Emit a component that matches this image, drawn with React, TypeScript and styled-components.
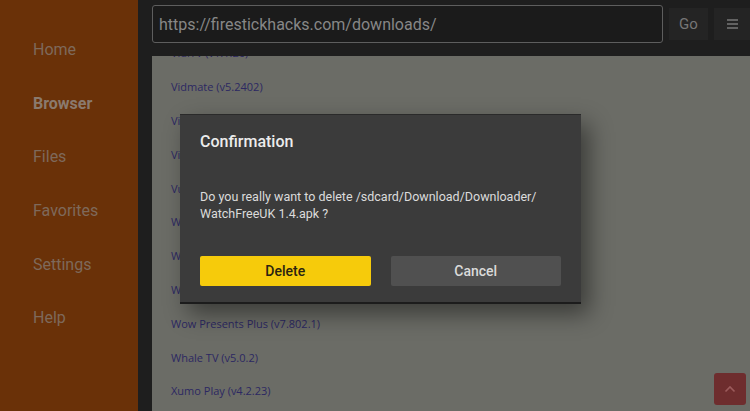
import * as React from 'react';
import styled, { createGlobalStyle } from 'styled-components';

const GlobalStyle = createGlobalStyle`
  html, body {
    margin: 0;
    padding: 0;
    background: #1e1e1e;
  }
  body {
    font-family: Roboto, "Noto Sans", sans-serif;
  }
`;

const StyledScreen = styled.div`
  display: flex;
  position: relative;
  width: 750px;
  height: 411px;
  overflow: hidden;
`;

const StyledSidebar = styled.nav`
  flex-direction: column;
  display: flex;
  flex: 0 0 138px;
  padding-top: 23px;
  background-color: #6a3108;
`;

const StyledNavItem = styled.div<{ $active?: boolean }>`
  align-items: center;
  display: flex;
  height: 53.6px;
  padding-left: 33px;
  font-size: 16px;
  font-weight: ${(p) => (p.$active ? 700 : 400)};
  color: ${(p) => (p.$active ? '#8a7a6e' : '#7e695b')};
`;

const StyledMain = styled.div`
  flex-direction: column;
  display: flex;
  flex: 1;
  padding-left: 14px;
  background-color: #1e1e1e;
`;

const StyledToolbar = styled.div`
  align-items: flex-start;
  display: flex;
  gap: 6px;
  flex: 0 0 56px;
  padding-top: 5px;
  box-sizing: border-box;
`;

const StyledUrlInput = styled.div`
  align-items: center;
  display: flex;
  flex: 0 0 511px;
  box-sizing: border-box;
  height: 38px;
  padding-left: 6px;
  border: 1px solid #5e5e5e;
  border-radius: 3px;
  background-color: #1b1b1b;
  font-size: 16px;
  color: #878787;
  white-space: nowrap;
`;

const StyledToolButton = styled.div<{ $width: number }>`
  justify-content: center;
  align-items: center;
  display: flex;
  margin-top: 3px;
  width: ${(p) => p.$width}px;
  height: 32px;
  background-color: #242424;
  font-size: 15px;
  color: #767676;
`;

const StyledContent = styled.div`
  flex: 1;
  overflow: hidden;
  background-color: #6b6c66;
`;

const StyledList = styled.ul`
  margin: -20px 0 0;
  padding: 0 0 0 19px;
  list-style: none;
`;

const StyledLink = styled.li`
  align-items: center;
  display: flex;
  height: 33.8px;
  font-family: "Open Sans", "Noto Sans", sans-serif;
  font-size: 11px;
  color: #2c2862;
  white-space: nowrap;
`;

const StyledOverlay = styled.div`
  justify-content: center;
  align-items: center;
  display: flex;
  position: absolute;
  inset: 0;
  padding: 6px 0 0 11px;
`;

const StyledDialog = styled.div`
  flex-direction: column;
  display: flex;
  box-sizing: border-box;
  width: 401px;
  padding: 17px 20px 16px;
  border-top: 1px solid #2a2a2a;
  border-bottom: 2px solid #1c1c1c;
  background-color: #3b3b3b;
  box-shadow: 8px 10px 22px rgba(0, 0, 0, 0.45);
`;

const StyledTitle = styled.div`
  line-height: 20px;
  font-size: 16px;
  font-weight: 500;
  color: #ececec;
`;

const StyledMessage = styled.p`
  margin: 36px 0 34px;
  line-height: 17px;
  font-size: 12.5px;
  color: #dcdcdc;
`;

const StyledActions = styled.div`
  display: flex;
  gap: 20px;
`;

const StyledDialogButton = styled.button<{ $primary?: boolean }>`
  flex: 1;
  height: 30px;
  border: none;
  border-radius: 2px;
  padding: 0;
  background-color: ${(p) => (p.$primary ? '#f6cb0b' : '#505050')};
  font-family: Roboto, "Noto Sans", sans-serif;
  font-size: 14px;
  font-weight: 500;
  color: ${(p) => (p.$primary ? '#2a2411' : '#dadada')};
`;

const StyledScrollTop = styled.div`
  justify-content: center;
  align-items: center;
  display: flex;
  position: absolute;
  right: 4px;
  bottom: 6px;
  width: 32px;
  height: 32px;
  border-radius: 3px;
  background-color: #6e2d2e;
`;

const navItems = ['Home', 'Browser', 'Files', 'Favorites', 'Settings', 'Help'];

const apps = [
  'VidiTV (v1.1.26)',
  'Vidmate (v5.2402)',
  'Viki (v23.4.1)',
  'Vix (v4.12.0)',
  'Vudu (v9.2.1)',
  'WatchFreeUK (v1.4)',
  'Weatherbug (v5.95.1)',
  'WWE (v48.2.0)',
  'Wow Presents Plus (v7.802.1)',
  'Whale TV (v5.0.2)',
  'Xumo Play (v4.2.23)',
];

const MenuIcon = () => (
  <svg width="11" height="10" viewBox="0 0 11 10">
    <path d="M0 1h11M0 5h11M0 9h11" stroke="#777" strokeWidth="1.4" />
  </svg>
);

const ChevronUp = () => (
  <svg width="12" height="8" viewBox="0 0 12 8">
    <path d="M1.5 6.5 6 2l4.5 4.5" fill="none" stroke="#9c5b5c" strokeWidth="1.6" />
  </svg>
);

export default function App() {
  return (
    <StyledScreen>
      <GlobalStyle />
      <StyledSidebar>
        {navItems.map((item) => (
          <StyledNavItem key={item} $active={item === 'Browser'}>
            {item}
          </StyledNavItem>
        ))}
      </StyledSidebar>
      <StyledMain>
        <StyledToolbar>
          <StyledUrlInput>https://firestickhacks.com/downloads/</StyledUrlInput>
          <StyledToolButton $width={39}>Go</StyledToolButton>
          <StyledToolButton $width={36}>
            <MenuIcon />
          </StyledToolButton>
        </StyledToolbar>
        <StyledContent>
          <StyledList>
            {apps.map((app) => (
              <StyledLink key={app}>{app}</StyledLink>
            ))}
          </StyledList>
        </StyledContent>
      </StyledMain>
      <StyledOverlay>
        <StyledDialog>
          <StyledTitle>Confirmation</StyledTitle>
          <StyledMessage>
            Do you really want to delete /sdcard/Download/Downloader/
            <br />
            WatchFreeUK 1.4.apk ?
          </StyledMessage>
          <StyledActions>
            <StyledDialogButton $primary>Delete</StyledDialogButton>
            <StyledDialogButton>Cancel</StyledDialogButton>
          </StyledActions>
        </StyledDialog>
      </StyledOverlay>
      <StyledScrollTop>
        <ChevronUp />
      </StyledScrollTop>
    </StyledScreen>
  );
}
